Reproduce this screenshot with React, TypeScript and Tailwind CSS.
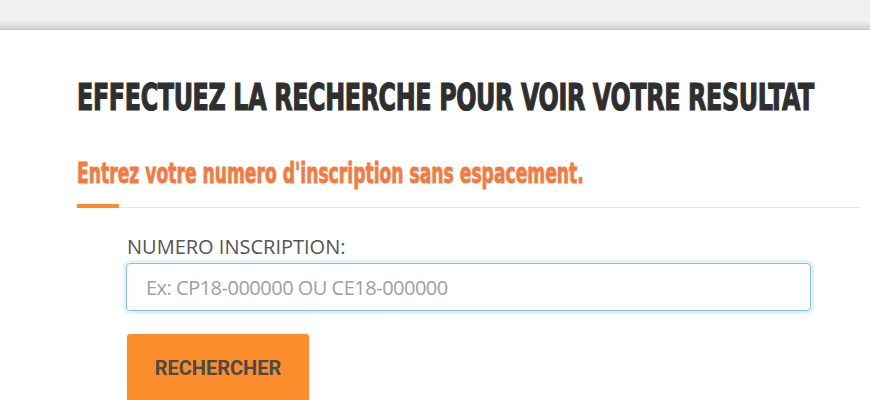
export default function App() {
  return (
    <div className="h-[400px] bg-white overflow-hidden">
      {/* top bar */}
      <div className="h-[30px] bg-gradient-to-b from-[#f0f0f0] from-70% to-[#d2d2d2] border-b border-[#c8c8c8]" />

      <div className="pl-[77px] pr-[10px] pt-[45px]">
        <h1
          className="whitespace-nowrap origin-left scale-x-[0.696] text-[#2f2f2f] text-[38px] leading-[44px] font-bold uppercase tracking-[-0.5px] [-webkit-text-stroke:1.2px_#2f2f2f]"
          style={{ fontFamily: '"DejaVu Sans Condensed", "DejaVu Sans", sans-serif' }}
        >
          EFFECTUEZ LA RECHERCHE POUR VOIR VOTRE RESULTAT
        </h1>

        <h2
          className="mt-[37px] whitespace-nowrap origin-left scale-x-[0.658] text-[#f47a3f] text-[29px] leading-[34px] font-bold [-webkit-text-stroke:0.8px_#f47a3f]"
          style={{ fontFamily: '"DejaVu Sans Condensed", "DejaVu Sans", sans-serif' }}
        >
          Entrez votre numero d'inscription sans espacement.
        </h2>

        <div className="mt-[14px] flex items-end">
          <div className="w-[42px] h-[4px] bg-[#fd8a2d]" />
          <div className="flex-1 h-px bg-[#e8e8e8]" />
        </div>

        <div className="pl-[49px] w-[734px] mt-[27px]">
          <label
            className="block pl-[1px] text-[#555] text-[20px] leading-[24px]"
            style={{ fontFamily: '"Open Sans", sans-serif' }}
          >
            NUMERO INSCRIPTION:
          </label>
          <input
            type="text"
            placeholder="Ex: CP18-000000 OU CE18-000000"
            className="mt-[4px] w-full h-[48px] rounded-[4px] border border-[#80bdff] px-[19px] text-[20px] tracking-[-0.5px] text-[#555] placeholder:text-[#a0a0a0] outline-none shadow-[0_0_0_3px_rgba(0,123,255,0.10)]"
            style={{ fontFamily: '"Open Sans", sans-serif' }}
          />
          <button
            className="mt-[23px] ml-[1px] w-[182px] h-[67px] rounded-t-[3px] bg-[#fd8c2a] text-[#4a4a4a] text-[20px] font-bold"
            style={{ fontFamily: 'Roboto, sans-serif' }}
          >
            RECHERCHER
          </button>
        </div>
      </div>
    </div>
  );
}
